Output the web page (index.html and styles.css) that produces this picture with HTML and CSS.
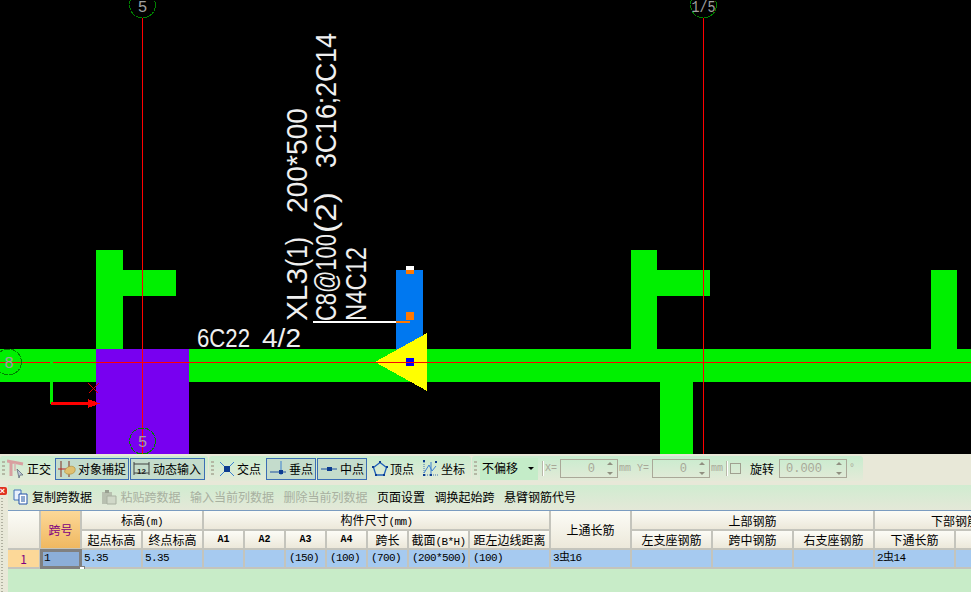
FILE: index.html
```html
<!DOCTYPE html>
<html lang="zh">
<head>
<meta charset="utf-8">
<title>梁平法表格</title>
<link rel="stylesheet" href="styles.css">
</head>
<body>
<div class="app">
  <svg class="canvas" width="971" height="454" viewBox="0 0 971 454">
    <g class="crisp">
      <rect class="green" x="0" y="349" width="971" height="33"/>
      <rect class="green" x="96" y="250" width="27" height="99"/>
      <rect class="green" x="123" y="270" width="53" height="26"/>
      <rect class="green" x="631" y="250" width="26" height="99"/>
      <rect class="green" x="657" y="270" width="53" height="26"/>
      <rect class="green" x="660" y="382" width="33" height="72"/>
      <rect class="green" x="931" y="270" width="26" height="79"/>
      <rect class="purple" x="96" y="349" width="93" height="105"/>
      <rect class="blue" x="396" y="270" width="27" height="80"/>
      <polygon class="yellow" points="375,362 427,333 427,391"/>
      <rect class="white" x="313" y="321" width="83" height="2"/>
      <rect class="orange" x="396" y="321" width="14" height="2"/>
      <rect class="white" x="406" y="266" width="8" height="4"/>
      <rect class="orange" x="406" y="270" width="8" height="4"/>
      <rect class="orange" x="406" y="312" width="8" height="8"/>
      <line class="redline" x1="0" y1="362.500" x2="971" y2="362.500"/>
      <line class="redline" x1="142.500" y1="18" x2="142.500" y2="454"/>
      <line class="redline" x1="703.500" y1="18" x2="703.500" y2="454"/>
      <rect class="pure-blue" x="406" y="358" width="8" height="8"/>
      <line class="redline" x1="406" y1="362.500" x2="414" y2="362.500"/>
      <circle class="axis" cx="142.500" cy="5" r="13"/>
      <circle class="axis" cx="703.500" cy="5" r="13"/>
      <circle class="axis" cx="142.500" cy="441" r="13"/>
      <circle class="axis" cx="8.500" cy="362" r="13"/>
      <rect class="green" x="50" y="355" width="3" height="49"/>
      <rect class="red-fill" x="51" y="402" width="38" height="3"/>
      <polygon class="red-fill" points="88,399 100,403.500 88,408"/>
      <path class="cross" d="M88.500 383.500l10 10M98.500 383.500l-10 10"/>
    </g>
    <text class="axis-label" x="142.500" y="12" text-anchor="middle">5</text>
    <text class="axis-label" x="703.500" y="12" text-anchor="middle" textLength="24" lengthAdjust="spacingAndGlyphs">1/5</text>
    <text class="axis-label" x="142.500" y="447" text-anchor="middle">5</text>
    <text class="axis-label" x="9" y="368" text-anchor="middle">8</text>
    <text class="cad-h" x="197" y="347" textLength="53" lengthAdjust="spacingAndGlyphs">6C22</text>
    <text class="cad-h" x="262" y="347" textLength="39" lengthAdjust="spacingAndGlyphs">4/2</text>
    <g transform="translate(307 321) rotate(-90)">
      <text class="cad-v" x="0" textLength="53" lengthAdjust="spacingAndGlyphs">XL3</text>
      <text class="cad-v" x="54" textLength="30" lengthAdjust="spacingAndGlyphs">(1)</text>
      <text class="cad-v" x="108" textLength="105" lengthAdjust="spacingAndGlyphs">200*500</text>
    </g>
    <g transform="translate(336 321) rotate(-90)">
      <text class="cad-v" x="0" textLength="87" lengthAdjust="spacingAndGlyphs">C8@100</text>
      <text class="cad-v" x="88" textLength="41" lengthAdjust="spacingAndGlyphs">(2)</text>
      <text class="cad-v" x="153" textLength="135" lengthAdjust="spacingAndGlyphs">3C16;2C14</text>
    </g>
    <g transform="translate(366 321) rotate(-90)">
      <text class="cad-v" x="0" textLength="74" lengthAdjust="spacingAndGlyphs">N4C12</text>
    </g>
  </svg>

  <div class="toolbar">
    <div class="tool-group group-a">
      <span class="grip"></span>
      <span class="tool t-ortho">
        <svg class="ico" width="18" height="20" viewBox="0 0 18 20"><path d="M0 2l16 3M4 3v14" class="pink"/><path d="M8 4v8" class="pink-thin"/><path d="M10 10l6 6-3 0-1 3z" class="cursor"/></svg>
        <span>正交</span>
      </span>
      <span class="tool on w-snap">
        <svg class="ico" width="18" height="18" viewBox="0 0 18 18"><path d="M3 1v16M11 1v16" class="brown"/><path d="M0 9h14" class="redstroke"/><path d="M7 10c2-4 8-5 10-2 1 4-2 7-8 6-2-1-3-2-2-4z" class="gold"/></svg>
        <span>对象捕捉</span>
      </span>
      <span class="tool on w-input">
        <svg class="ico" width="18" height="18" viewBox="0 0 18 18"><path d="M1 2v13M16 2v13M1 4h15M1 13h15" class="darkline"/><text x="4" y="14" class="mini">12</text></svg>
        <span>动态输入</span>
      </span>
    </div>
    <div class="tool-group group-b">
      <span class="grip"></span>
      <span class="tool t-pt">
        <svg class="ico" width="16" height="16" viewBox="0 0 16 16"><path d="M1 1l14 14M15 1L1 15" class="bluelight"/><rect x="5" y="5" width="6" height="6" class="navy"/></svg>
        <span>交点</span>
      </span>
      <span class="tool on w-pt">
        <svg class="ico" width="18" height="16" viewBox="0 0 18 16"><path d="M12 0v14" class="bluelight"/><path d="M1 11h16" class="bluedark"/><rect x="10" y="9" width="4" height="4" class="navy"/></svg>
        <span>垂点</span>
      </span>
      <span class="tool on w-pt">
        <svg class="ico" width="18" height="16" viewBox="0 0 18 16"><path d="M1 8h16" class="bluedark"/><rect x="7" y="6" width="5" height="4" class="navy"/></svg>
        <span>中点</span>
      </span>
      <span class="tool t-top">
        <svg class="ico" width="16" height="16" viewBox="0 0 16 16"><path d="M8 1.500l6.500 5-2.500 7.500H4l-2.500-7.500z" class="bluedark-t"/><path d="M7 0h2v2H7zM0 5h2v2H0zM14 5h2v2h-2zM3 13h2v2H3zM11 13h2v2h-2z" class="navy"/></svg>
        <span>顶点</span>
      </span>
      <span class="tool t-coord">
        <svg class="ico" width="17" height="17" viewBox="0 0 17 17"><path d="M2 2v13h14" class="dotline"/><path d="M2 13l5-8 3 6 4-5M9 2v13" class="bluelight"/><path d="M1 0h2v2H1zM13 1h2v2h-2zM1 14h2v2H1zM8 14h2v2H8z" class="navy"/></svg>
        <span>坐标</span>
      </span>
    </div>
    <div class="tool-group group-c">
      <span class="grip"></span>
      <span class="combo"><span>不偏移</span><i class="caret"></i></span>
      <span class="sep"></span>
      <span class="dim lab-x">X=</span>
      <span class="spin"><span class="val">0</span><span class="arrows"><i class="up"></i><i class="down"></i></span></span>
      <span class="dim lab-mm">mm</span>
      <span class="dim lab-y">Y=</span>
      <span class="spin"><span class="val">0</span><span class="arrows"><i class="up"></i><i class="down"></i></span></span>
      <span class="dim lab-mm">mm</span>
      <span class="sep sep2"></span>
      <span class="check"></span>
      <span class="rot">旋转</span>
      <span class="spin spin-w"><span class="val">0.000</span><span class="arrows"><i class="up"></i><i class="down"></i></span></span>
      <span class="dim deg">°</span>
    </div>
  </div>

  <div class="lower">
    <div class="side">
      <span class="close">×</span>
      <span class="side-dots"></span>
    </div>
    <div class="panel">
      <div class="actions">
        <svg class="ico act-ico" width="16" height="16" viewBox="0 0 16 16"><path d="M1 1h7v10H1z" class="paper"/><path d="M6 5h8v10H6z" class="paper2"/><path d="M8 8h4M8 10h4M8 12h4" class="bluedark"/></svg>
        <span class="act">复制跨数据</span>
        <svg class="ico act-ico2" width="16" height="16" viewBox="0 0 16 16"><path d="M1 3h10v12H1z" class="gray-f"/><path d="M4 1h4v3H4z" class="gray-d"/><path d="M6 7h9v8H6z" class="gray-l"/></svg>
        <span class="act off">粘贴跨数据</span>
        <span class="act off">输入当前列数据</span>
        <span class="act off">删除当前列数据</span>
        <span class="act">页面设置</span>
        <span class="act">调换起始跨</span>
        <span class="act">悬臂钢筋代号</span>
      </div>
      <div class="grid-wrap">
        <table class="grid">
          <colgroup>
            <col class="c33"><col class="c41"><col class="c61"><col class="c61"><col class="c41"><col class="c41"><col class="c41"><col class="c41"><col class="c41"><col class="c61"><col class="c81"><col class="c81"><col class="c81"><col class="c81"><col class="c81"><col class="c81"><col class="c81">
          </colgroup>
          <thead>
            <tr>
              <th rowspan="2"></th>
              <th rowspan="2" class="hot">跨号</th>
              <th colspan="2">标高<span class="num">(m)</span></th>
              <th colspan="7">构件尺寸<span class="num">(mm)</span></th>
              <th rowspan="2">上通长筋</th>
              <th colspan="3">上部钢筋</th>
              <th colspan="2">下部钢筋</th>
            </tr>
            <tr>
              <th>起点标高</th><th>终点标高</th>
              <th class="num b">A1</th><th class="num b">A2</th><th class="num b">A3</th><th class="num b">A4</th>
              <th>跨长</th><th>截面<span class="num">(B*H)</span></th><th>距左边线距离</th>
              <th>左支座钢筋</th><th>跨中钢筋</th><th>右支座钢筋</th><th>下通长筋</th><th></th>
            </tr>
          </thead>
          <tbody>
            <tr>
              <th class="rowno">1</th>
              <td class="num active">1<i class="handle"></i></td>
              <td class="num">5.35</td><td class="num">5.35</td>
              <td></td><td></td>
              <td class="num pad">(150)</td><td class="num pad">(100)</td><td class="num pad">(700)</td><td class="num pad">(200*500)</td><td class="num pad">(100)</td>
              <td class="num">3虫16</td><td></td><td></td><td></td><td class="num">2虫14</td><td></td>
            </tr>
          </tbody>
        </table>
      </div>
    </div>
  </div>
</div>
</body>
</html>
```
FILE: styles.css
```css
* { box-sizing: border-box; }
html, body { margin: 0; padding: 0; background: #e8e8d8; }
body { font: 12px "Noto Sans CJK SC", "Liberation Sans", sans-serif; color: #000; }
.app { width: 971px; height: 592px; overflow: hidden; display: flex; flex-direction: column; }

.canvas { display: block; flex: none; background: #000; }
.crisp { shape-rendering: crispEdges; }
.green { fill: #00f000; }
.purple { fill: #7800f0; }
.blue { fill: #0078f0; }
.yellow { fill: #ffff00; }
.white { fill: #fff; }
.orange { fill: #ff7800; }
.pure-blue { fill: #0000ff; }
.red-fill { fill: #ff0000; }
.redline { stroke: #ff0000; stroke-width: 1; }
.cross { stroke: #e00000; stroke-width: 1; fill: none; }
.axis { fill: none; stroke: #008000; stroke-width: 1; stroke-dasharray: 6 1; }
.axis-label { fill: #a0a0a0; font: 16px "Liberation Mono", monospace; }
.cad-h, .cad-v { fill: #f0f0f0; font-family: "Liberation Sans", sans-serif; }
.cad-h { font-size: 25px; }
.cad-v { font-size: 30px; }

.toolbar { flex: none; height: 31px; display: flex; align-items: flex-start; padding-top: 2px; background: #e8e8d8; }
.tool-group { height: 25px; display: flex; align-items: center; background: linear-gradient(#c8ecce, #e4ead8); border-radius: 3px; }
.group-a { width: 208px; }
.group-b { width: 262px; margin-left: 1px; }
.group-c { width: 391px; margin-left: 1px; }
.grip { width: 3px; height: 16px; margin: 0 2px 0 2px; flex: none; background: repeating-linear-gradient(#b4b8a4 0 2px, transparent 2px 4px); }
.tool { display: flex; align-items: center; height: 22px; flex: none; font-size: 12px; white-space: nowrap; }
.ico { flex: none; display: block; }
.tool.on { border: 1px solid #3c6eb4; background: #c4dccc; margin-right: 1px; }
.t-ortho { width: 48px; gap: 2px; }
.w-snap { width: 74px; padding-left: 2px; gap: 2px; }
.w-input { width: 75px; padding-left: 2px; gap: 2px; }
.t-pt { width: 47px; margin-left: 3px; gap: 2px; }
.w-pt { width: 50px; padding-left: 2px; gap: 2px; }
.t-top { width: 47px; margin-left: 4px; gap: 2px; }
.t-coord { width: 44px; margin-left: 3px; gap: 2px; }
.pink { stroke: #d8a0a0; stroke-width: 3; fill: none; }
.pink-thin { stroke: #d8b0b0; stroke-width: 1.500; fill: none; }
.cursor { fill: #c0c8d8; stroke: #506070; stroke-width: .7; }
.brown { stroke: #803020; stroke-width: 1; fill: none; }
.redstroke { stroke: #c02020; stroke-width: 1; fill: none; }
.gold { fill: #e0c070; stroke: #b09040; stroke-width: .7; }
.darkline { stroke: #404040; stroke-width: 1; fill: none; }
.mini { font: bold 8px "Liberation Sans", sans-serif; fill: #202020; }
.bluelight { stroke: #3c80d0; stroke-width: 1; fill: none; }
.bluedark { stroke: #1c50a0; stroke-width: 1; fill: none; }
.bluedark-t { stroke: #2060b8; stroke-width: 1.300; fill: none; }
.dotline { stroke: #3c70b0; stroke-width: 1; stroke-dasharray: 1 1; fill: none; }
.navy { fill: #0c3c90; }

.combo { width: 58px; height: 22px; margin-left: 1px; background: #c4ecc8; display: flex; align-items: center; justify-content: space-between; padding: 0 3px 2px 2px; flex: none; }
.caret { width: 0; height: 0; border: 3px solid transparent; border-top: 3px solid #000; margin-top: 5px; margin-right: 1px; }
.sep { width: 2px; height: 15px; margin: 0 1px 0 4px; border-left: 1px solid #b8b8a8; border-right: 1px solid #fff; flex: none; }
.dim { color: #a8a898; font: 10px "Liberation Mono", monospace; flex: none; }
.lab-x { width: 15px; }
.lab-y { width: 15px; margin-left: 6px; }
.lab-mm { width: 12px; margin-left: 1px; }
.spin { width: 58px; height: 19px; border: 1px solid #aaa898; display: flex; justify-content: flex-end; align-items: center; flex: none; }
.val { color: #a8a898; font: 12px "Liberation Mono", monospace; margin-right: 8px; }
.arrows { width: 14px; height: 17px; display: flex; flex-direction: column; justify-content: space-between; align-items: center; padding: 2px 0; }
.up, .down { width: 0; height: 0; border: 3px solid transparent; }
.up { border-bottom: 3px solid #908f80; border-top: 0; }
.down { border-top: 3px solid #908f80; border-bottom: 0; }
.spin-w { width: 68px; }
.spin-w .val { margin-right: 10px; }
.sep2 { margin-left: 3px; margin-right: 2px; }
.check { width: 11px; height: 11px; border: 1px solid #a0a090; flex: none; }
.rot { width: 29px; margin-left: 9px; flex: none; }
.deg { margin-left: 2px; }

.lower { flex: 1; display: flex; min-height: 0; }
.side { width: 8px; flex: none; position: relative; background: #e8e8d8; }
.close { position: absolute; left: -2px; top: 2px; width: 9px; height: 8px; background: #e03020; color: #fff; font: bold 9px/8px "Liberation Sans", sans-serif; text-align: center; border-radius: 2px; }
.side-dots { position: absolute; left: 1px; top: 13px; bottom: 0; width: 2px; background: repeating-linear-gradient(#b0b0a0 0 1px, transparent 1px 3px); }
.panel { flex: 1; min-width: 0; display: flex; flex-direction: column; background: #c8ecc8; }
.actions { height: 25px; flex: none; display: flex; align-items: center; padding: 0 0 2px 5px; background: linear-gradient(#d0ecd0, #e4e8d8); border-radius: 4px 0 0 0; }
.act { margin-right: 9.500px; white-space: nowrap; }
.act.off { color: #a8b0a0; }
.act-ico { margin-right: 3px; }
.act-ico2 { margin-right: 4px; margin-left: -1px; }
.paper { fill: #e8f0fc; stroke: #4070b8; }
.paper2 { fill: #fff; stroke: #2050a8; }
.gray-f { fill: #b8c0b0; }
.gray-d { fill: #98a090; }
.gray-l { fill: #d0d8c8; stroke: #a8b0a0; }

.grid-wrap { overflow: hidden; border-top: 1px solid #7a9cc0; flex: none; }
.grid { table-layout: fixed; width: 1029px; border-collapse: separate; border-spacing: 0; }
.c33 { width: 33px; }
.c41 { width: 41px; }
.c61 { width: 61px; }
.c81 { width: 81px; }
.grid th, .grid td { padding: 0 1px; height: 19px; line-height: 15px; font-size: 12px; font-weight: 400; overflow: hidden; white-space: nowrap; border-right: 2px solid #c4c4bc; border-bottom: 2px solid #c4c4bc; }
.grid thead tr:first-child th { height: 20px; }
.grid thead th { text-align: center; background: linear-gradient(#fcfcf6, #ece8da); }
.grid th.hot { background: linear-gradient(#fcd898, #f0b860); color: #800080; }
.grid tbody td { background: #a6caf0; text-align: left; padding-left: 2px; }
.grid tbody td.pad { padding-left: 3px; }
.grid th.rowno { background: #fcd898; color: #800080; text-align: center; }
.grid td.active { position: relative; overflow: visible; background: #8caed8; padding-left: 3px; }
.grid td.active::after { content: ""; position: absolute; left: -1px; top: -1px; right: -2px; bottom: -2px; border: 3px solid #808080; }
.handle { position: absolute; right: -5px; bottom: -5px; width: 6px; height: 6px; background: #fff; border: 1px solid #808080; z-index: 1; }
.num { line-height: 1; }
.grid .num { font-family: "Liberation Mono", "Noto Sans CJK SC", monospace; font-size: 11px; letter-spacing: -.6px; }
.grid th.b { font-weight: 700; font-size: 10px; letter-spacing: 0; }
```
